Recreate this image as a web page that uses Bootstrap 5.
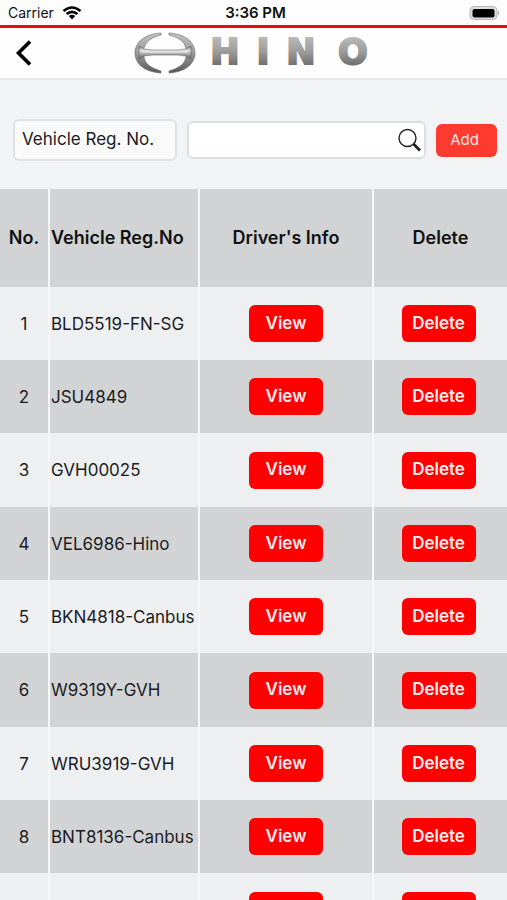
<!DOCTYPE html>
<html lang="en">
<head>
<meta charset="utf-8">
<meta name="viewport" content="width=device-width, initial-scale=1">
<title>Hino vehicles</title>
<link href="https://cdn.jsdelivr.net/npm/bootstrap@5.3.0/dist/css/bootstrap.min.css" rel="stylesheet">
<style>
body { font-family: Inter, "Liberation Sans", sans-serif; font-size: 17px; line-height: 20px; color: #1c1c1e; background: #f1f3f5; height: 100vh; overflow: hidden; }
.status-bar { height: 28px; font-size: 14px; background: #fdfdfd; border-bottom: 3px solid #e90b06; color: #111; }
.status-bar .clock { font-size: 15px; font-weight: 600; }
.brand-bar { height: 52px; background: #fefefe; border-bottom: 2px solid #e9e9ea; }
.back-btn { width: 48px; }
.search-row { padding: 39px 10px 28px 13px; gap: 10px; }
.field-select { width: 164px; height: 42px; flex: none; background: #fafafa; border: 2px solid #dfe1e2; border-radius: 6px; padding: 0 7px 2px; color: #1c1c1e; appearance: none; }
.search-box { height: 38px; min-width: 0; background: #fff; border: 2px solid #dcdee0; border-radius: 6px; padding-right: 2px; }
.search-box input { outline: 0; width: 0; min-width: 0; }
.add-btn { width: 61px; height: 33px; flex: none; font-size: 15px; color: #ffe5e3; background: #ff3b30; border-radius: 6px; padding: 0 4px 0 0; }
.vehicles { table-layout: fixed; border-collapse: separate; border-spacing: 0; }
.vehicles .col-no { width: 50px; }
.vehicles .col-reg { width: 150px; }
.vehicles .col-del { width: 133px; }
.vehicles th, .vehicles td { padding: 0; border-right: 2px solid #f6f7f8; text-align: center; }
.vehicles th:last-child, .vehicles td:last-child { border-right: 0; }
.vehicles th:nth-child(2), .vehicles td:nth-child(2) { text-align: left; padding-left: 1px; white-space: nowrap; }
.vehicles th { height: 98px; font-size: 18px; font-weight: 600; color: #111; }
.vehicles thead tr, .vehicles tbody tr:nth-child(even) { background: #d1d3d4; }
.vehicles tbody tr:nth-child(odd) { background: #edeff1; }
.vehicles td { height: 73px; }
.vehicles tr:nth-child(3n) td { height: 74px; }
.vehicles td:last-child { padding-right: 4px; }
.row-btn { width: 74px; height: 37px; padding: 0; font-size: 17px; font-weight: 600; color: #ffecec; background: #f00; border-radius: 6px; }
.row-btn:hover, .add-btn:hover { color: #fff; background: #d90000; }
</style>
<script src="https://cdn.jsdelivr.net/npm/bootstrap@5.3.0/dist/js/bootstrap.bundle.min.js"></script>
</head>
<body>
<div class="status-bar row g-0 align-items-center">
  <div class="col d-flex align-items-center gap-1 ps-2">
    <span>Carrier</span>
    <svg class="ms-1" width="20" height="14" viewBox="0 0 20 14" fill="none" stroke="#000" stroke-width="2.6" aria-label="Wi-Fi"><path d="M1.5 5Q10-2 18.500 5M4.600 8Q10 3.600 15.400 8"/><path d="M6.800 10Q10 7.600 13.200 10L10 13.400Z" fill="#000" stroke="none"/></svg>
  </div>
  <div class="col-auto clock">3:36 PM</div>
  <div class="col d-flex justify-content-end pe-1">
    <svg width="34" height="16" viewBox="0 0 34 16" aria-label="Battery"><rect x="1" y="1.500" width="27" height="13" rx="4" fill="#dedede" stroke="#b8b8b8"/><rect x="3.500" y="4" width="22" height="8.500" rx="2" fill="#000"/><path d="M29 5.500Q31.500 8 29 10.500Z" fill="#aaa"/></svg>
  </div>
</div>

<header class="brand-bar d-flex align-items-center">
  <button type="button" class="back-btn btn p-0 border-0" aria-label="Back">
    <svg width="18" height="28" viewBox="0 0 18 28" fill="none" stroke="#000" stroke-width="3.600"><path d="M15 2.500 3.500 14 15 25.500"/></svg>
  </button>
  <div class="flex-grow-1 text-center me-5">
    <svg width="244" height="46" viewBox="0 0 244 46" role="img" aria-label="Hino">
      <defs>
        <linearGradient id="metal" x1="0" y1="0" x2="0" y2="1"><stop offset="0" stop-color="#c4c4c4"/><stop offset=".5" stop-color="#9b9b9b"/><stop offset="1" stop-color="#585858"/></linearGradient>
        <linearGradient id="steel" x1="0" y1="0" x2="0" y2="1"><stop offset="0" stop-color="#777"/><stop offset=".35" stop-color="#e2e2e2"/><stop offset="1" stop-color="#555"/></linearGradient>
      </defs>
      <g stroke="#666" stroke-width=".6" fill="url(#metal)">
        <path d="M29 3C13 4 3 12 3 23C3 34 13 42 29 43L29 41C19 38 13 34 12 27L8 23L12 18C14 11 20 7 29 5Z"/>
        <path d="M37 3C53 4 63 12 63 23C63 34 53 42 37 43L37 41C47 38 53 34 54 27L58 23L54 18C52 11 46 7 37 5Z"/>
        <path d="M7 16Q12 20 20 20H46Q54 20 59 16V29Q54 25 46 25H20Q12 25 7 29Z" fill="url(#steel)"/>
      </g>
      <path d="M10 22H56" stroke="#eee" fill="none"/>
      <text x="93 131 169 221" y="34" text-anchor="middle" font-family="DejaVu Sans, sans-serif" font-weight="700" font-size="35" fill="url(#metal)" stroke="url(#metal)" stroke-width="2">HINO</text>
    </svg>
  </div>
</header>

<main>
  <form class="search-row d-flex align-items-center">
    <select class="field-select" aria-label="Search by"><option>Vehicle Reg. No.</option></select>
    <div class="search-box d-flex flex-grow-1 align-items-center">
      <input type="search" class="flex-grow-1 border-0 bg-transparent" aria-label="Search text">
      <button type="button" class="btn p-0 border-0 d-flex" aria-label="Search">
        <svg width="24" height="24" viewBox="0 0 24 24" fill="none" stroke="#222"><circle cx="9.500" cy="10" r="8.500" stroke-width="1.400"/><path d="M15.500 16 22 22.500" stroke-width="2.800"/></svg>
      </button>
    </div>
    <button type="button" class="add-btn btn border-0">Add</button>
  </form>

  <table class="vehicles w-100">
    <colgroup><col class="col-no"><col class="col-reg"><col><col class="col-del"></colgroup>
    <thead><tr><th scope="col">No.</th><th scope="col">Vehicle Reg.No</th><th scope="col">Driver's Info</th><th scope="col">Delete</th></tr></thead>
    <tbody>
      <tr><td>1</td><td>BLD5519-FN-SG</td><td><button type="button" class="row-btn btn border-0">View</button></td><td><button type="button" class="row-btn btn border-0">Delete</button></td></tr>
      <tr><td>2</td><td>JSU4849</td><td><button type="button" class="row-btn btn border-0">View</button></td><td><button type="button" class="row-btn btn border-0">Delete</button></td></tr>
      <tr><td>3</td><td>GVH00025</td><td><button type="button" class="row-btn btn border-0">View</button></td><td><button type="button" class="row-btn btn border-0">Delete</button></td></tr>
      <tr><td>4</td><td>VEL6986-Hino</td><td><button type="button" class="row-btn btn border-0">View</button></td><td><button type="button" class="row-btn btn border-0">Delete</button></td></tr>
      <tr><td>5</td><td>BKN4818-Canbus</td><td><button type="button" class="row-btn btn border-0">View</button></td><td><button type="button" class="row-btn btn border-0">Delete</button></td></tr>
      <tr><td>6</td><td>W9319Y-GVH</td><td><button type="button" class="row-btn btn border-0">View</button></td><td><button type="button" class="row-btn btn border-0">Delete</button></td></tr>
      <tr><td>7</td><td>WRU3919-GVH</td><td><button type="button" class="row-btn btn border-0">View</button></td><td><button type="button" class="row-btn btn border-0">Delete</button></td></tr>
      <tr><td>8</td><td>BNT8136-Canbus</td><td><button type="button" class="row-btn btn border-0">View</button></td><td><button type="button" class="row-btn btn border-0">Delete</button></td></tr>
      <tr><td></td><td></td><td><button type="button" class="row-btn btn border-0" aria-label="View"></button></td><td><button type="button" class="row-btn btn border-0" aria-label="Delete"></button></td></tr>
    </tbody>
  </table>
</main>
</body>
</html>
